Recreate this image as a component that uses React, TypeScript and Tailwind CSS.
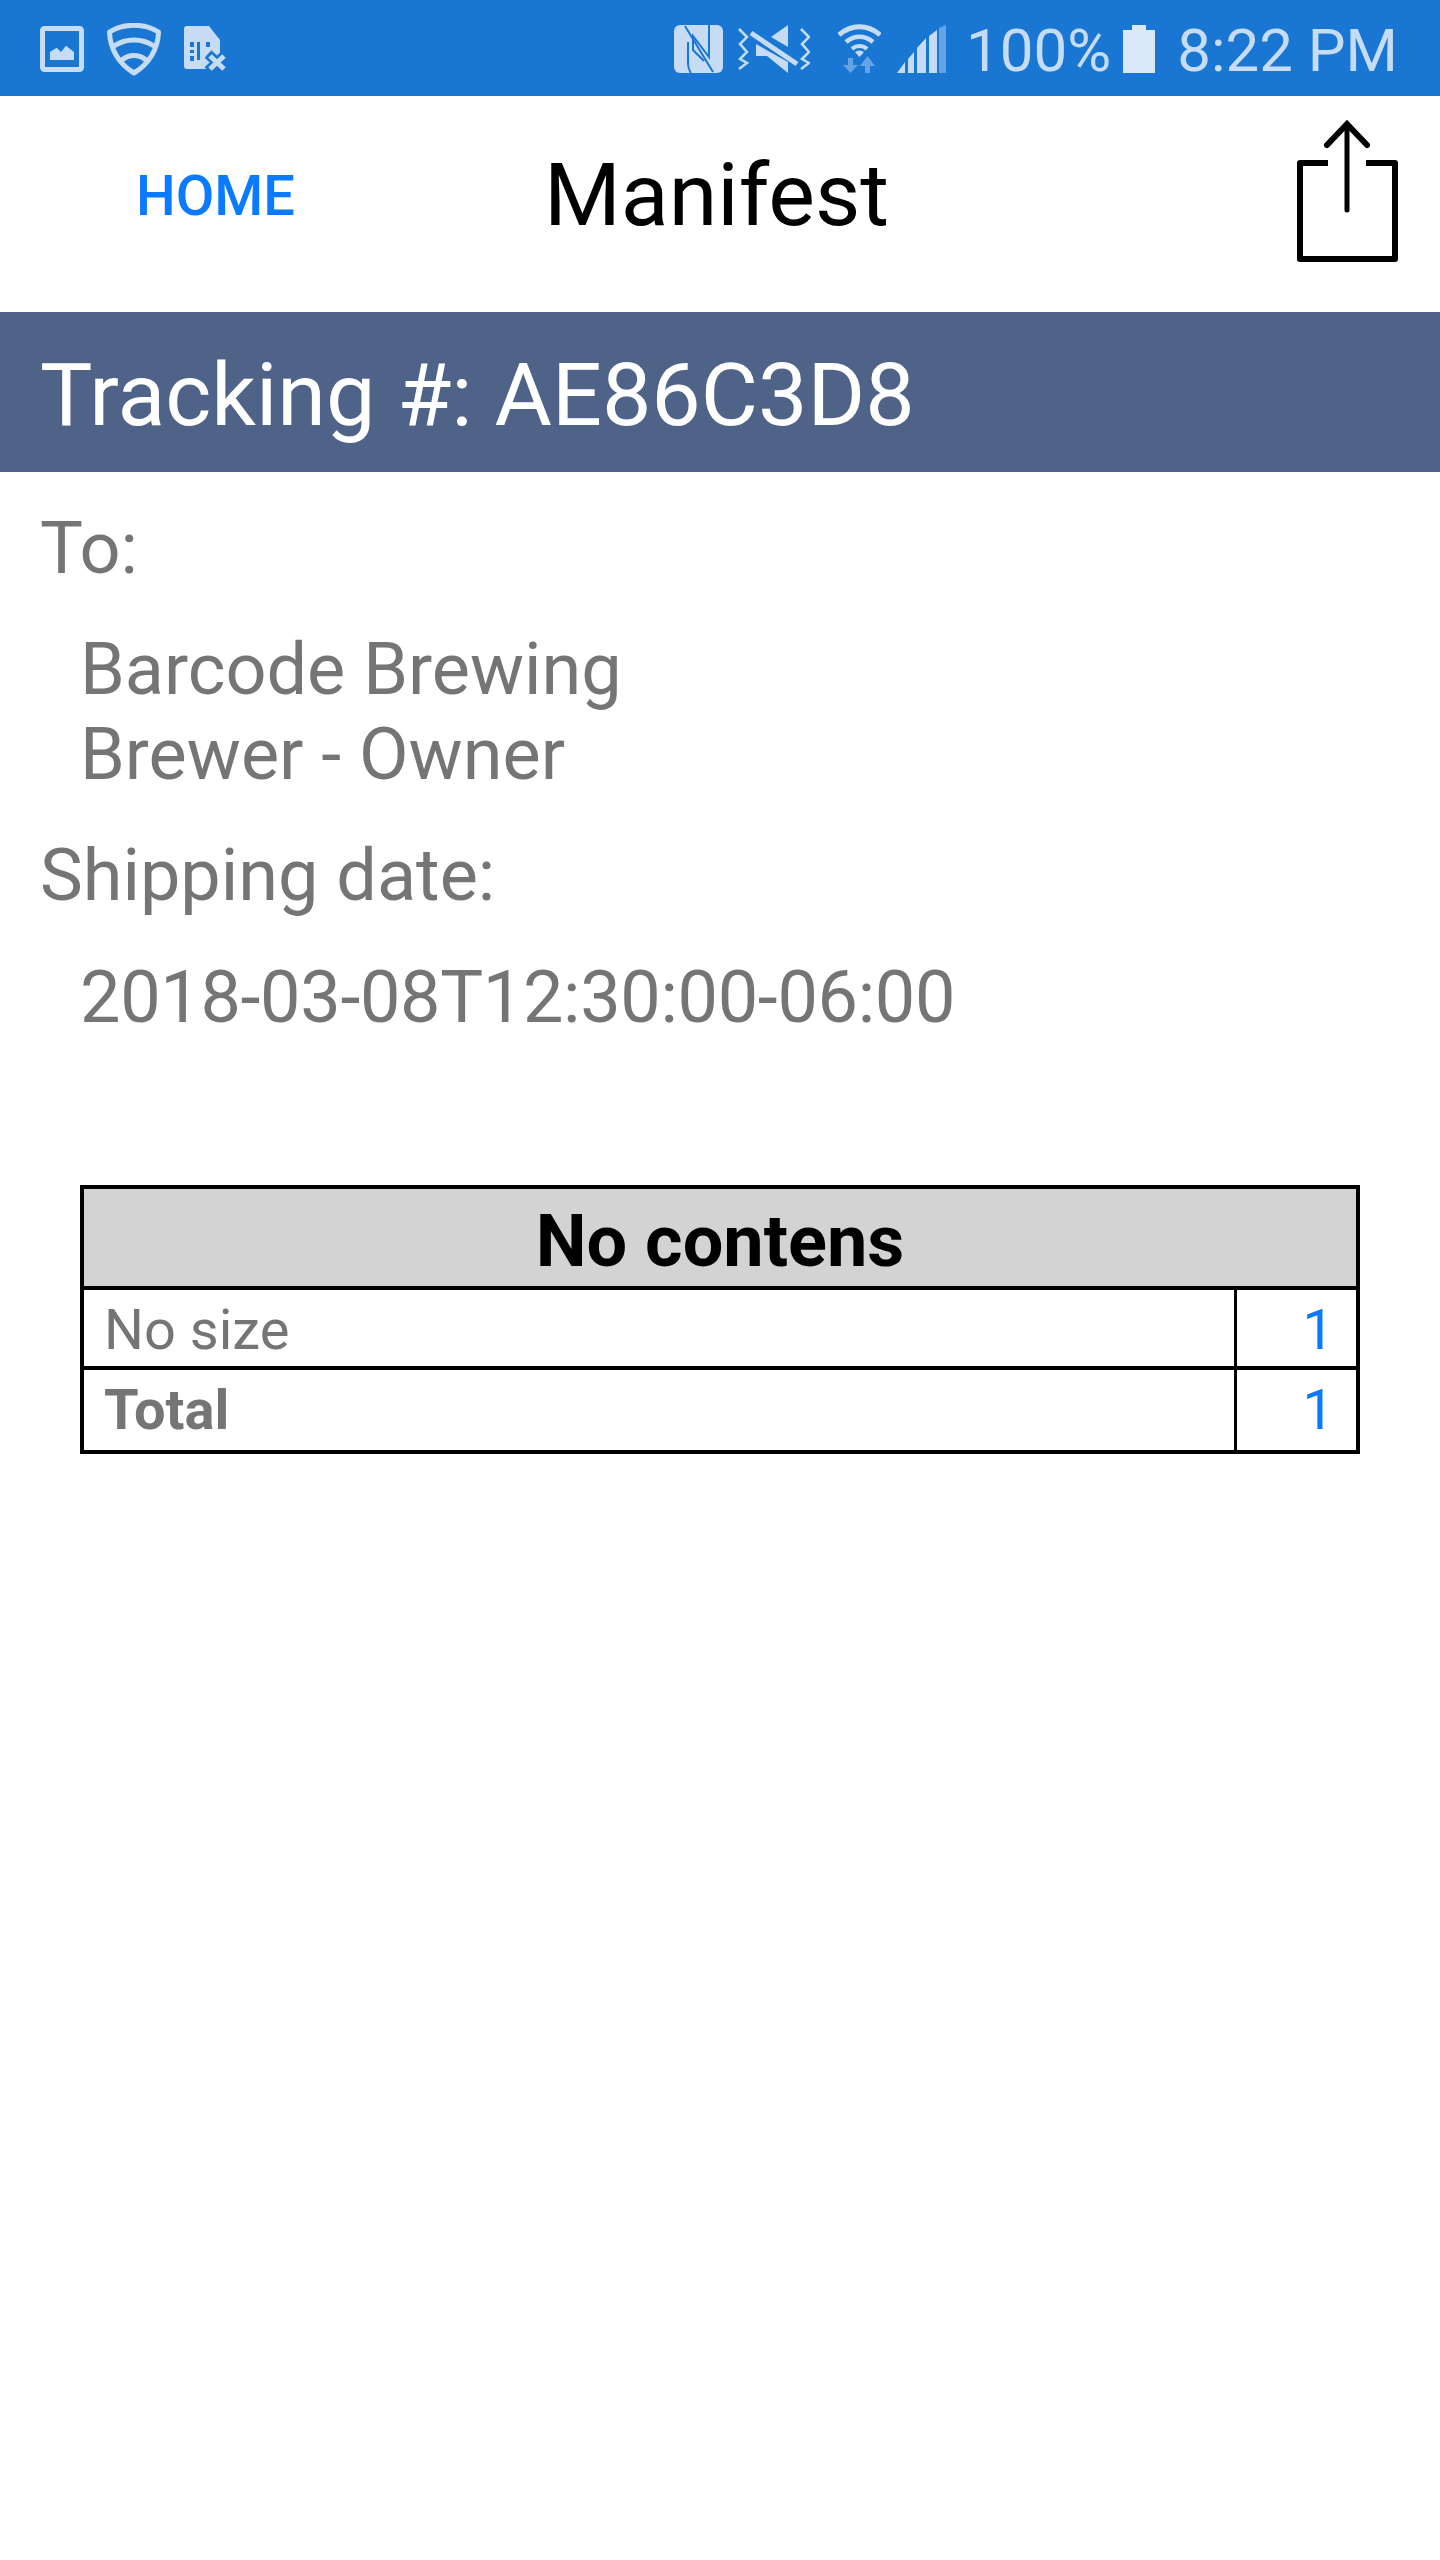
import React from 'react';

const BAR = '#1976d2';
const ICON = '#c6dcf5';

const StatusIcons = () => (
  <div className="flex items-start">
    {/* picture */}
    <svg width="44" height="46" viewBox="0 0 44 46" className="mt-[26px]">
      <rect x="2.5" y="2.5" width="39" height="41" rx="2" fill="none" stroke={ICON} strokeWidth="5" />
      <path d="M10 34V26L16.7 21.7 21 26 26 19.7 34 26V34Z" fill={ICON} />
    </svg>
    {/* shield */}
    <svg width="54" height="53" viewBox="0 0 54 53" className="mt-[23px] ml-[23px]" fill="none" stroke={ICON}>
      <path d="M2.5 9C17 0 37 0 51.5 9 51 26 42 41 27 50 12 41 3 26 2.500 9Z" strokeWidth="5" strokeLinejoin="round" />
      <path d="M7 23C19 15 35 15 47 23" strokeWidth="5" />
      <path d="M15 37C22 31 32 31 39 37" strokeWidth="5" />
    </svg>
    {/* sim x */}
    <svg width="60" height="48" viewBox="0 0 60 48" className="mt-[26px] ml-[23px]">
      <path d="M3 0H25L36 14V43H3Q0 43 0 40V3Q0 0 3 0Z" fill={ICON} />
      <path d="M6 16H10V21H6ZM6 24H10V27H6ZM6 30H10V35H6ZM13 16H16V34H13ZM22 16H26V21H22Z" fill={BAR} />
      <path d="M24 28L42 45M42 28L24 45" stroke={BAR} strokeWidth="10" />
      <path d="M26 30L40 43M40 30L26 43" stroke={ICON} strokeWidth="5" />
    </svg>
  </div>
);

const StatusRight = () => (
  <div className="flex items-start">
    {/* nfc */}
    <svg width="49" height="48" viewBox="0 0 49 48" className="mt-[25px]">
      <rect width="49" height="48" rx="6" fill={ICON} />
      <path d="M11 1L39 47M14 17V38Q14 44 17 48M35 0V32L19 11V25L30 36" fill="none" stroke={BAR} strokeWidth="2" />
    </svg>
    {/* mute vibrate */}
    <svg width="72" height="48" viewBox="0 0 72 48" className="mt-[25px] ml-[15px]" fill="none">
      <path d="M1 4L9 12 2 19 9 27 2 34 9 38 1 44" stroke={ICON} strokeWidth="2.500" />
      <path d="M63 4L71 12 64 19 71 27 64 34 71 38 63 44" stroke={ICON} strokeWidth="2.500" />
      <path d="M33 12L50 0V22Z" fill={ICON} />
      <path d="M18 19V31H29L50 48V37Z" fill={ICON} />
      <path d="M13 8L59 39" stroke={ICON} strokeWidth="5" />
    </svg>
    {/* wifi */}
    <svg width="43" height="49" viewBox="0 0 43 49" className="mt-[24px] ml-[28px]" fill="none">
      <path d="M1 11C13 0 30 0 42 11" stroke={ICON} strokeWidth="5" />
      <path d="M8 18C16 11 27 11 35 18" stroke={ICON} strokeWidth="4.500" />
      <path d="M14 25C18 21 25 21 29 25" stroke={ICON} strokeWidth="4" />
      <path d="M17 28C20 26 23 26 26 28L21.500 33Z" fill={ICON} />
      <path d="M10 34H15V41H20L12.500 49 5 41H10ZM27 49V42H22L29.500 32 37 42H32V49Z" fill="#64a3e4" />
    </svg>
    {/* signal */}
    <svg width="49" height="48" viewBox="0 0 49 48" className="mt-[25px] ml-[16px]">
      <path d="M0 48L8 37V48ZM11 34L17 27V48H11ZM20 23L29 13V48H20ZM32 11L40 5V48H32Z" fill={ICON} />
      <path d="M42 3L49 0V48H42Z" fill="#64a3e4" />
    </svg>
    <span className="font-['Roboto'] text-[60px] leading-[102px] text-[#c6dcf5] ml-[20px]">100%</span>
    {/* battery */}
    <svg width="32" height="48" viewBox="0 0 32 48" className="mt-[25px] ml-[12px]">
      <path d="M9 0H23V5H32V48H0V5H9Z" fill="#dbe8f9" />
    </svg>
    <span className="font-['Roboto'] text-[60px] leading-[102px] text-[#c6dcf5] ml-[22px]">8:22 PM</span>
  </div>
);

const ShareIcon = () => (
  <svg width="104" height="144" viewBox="0 0 104 144" fill="none" stroke="#000" strokeLinecap="round" strokeLinejoin="round">
    <path d="M33 44H5V140H100V44H71" strokeWidth="6" strokeLinecap="butt" />
    <path d="M52 6V91" strokeWidth="5" />
    <path d="M32 26L52 5 72 26" strokeWidth="6" strokeLinejoin="miter" />
  </svg>
);

export default function App() {
  return (
    <div className="w-[1440px] min-h-[2560px] bg-white font-['Roboto',sans-serif] text-[#757575]">
      <div className="h-[96px] bg-[#1976d2] flex justify-between pl-[40px] pr-[42px]">
        <StatusIcons />
        <StatusRight />
      </div>

      <div className="h-[216px] flex items-center justify-between relative">
        <span className="text-[56px] font-medium text-[#0a7aff] ml-[136px] mb-[17px]">HOME</span>
        <span className="text-[88px] text-black absolute left-[544px] top-[-9px] leading-[216px]">Manifest</span>
        <div className="mr-[41px] mb-[26px]">
          <ShareIcon />
        </div>
      </div>

      <div className="h-[160px] bg-[#4f6388] text-white text-[88px] leading-[166px] pl-[40px]">
        Tracking #: AE86C3D8
      </div>

      <div className="text-[72px] leading-[85px] pl-[40px] pt-[34px]">
        <div>To:</div>
        <div className="pl-[40px] pt-[36px]">
          <div>Barcode Brewing</div>
          <div>Brewer - Owner</div>
        </div>
        <div className="pt-[36px]">Shipping date:</div>
        <div className="pl-[40px] pt-[37px] tracking-[-0.33px]">2018-03-08T12:30:00-06:00</div>
      </div>

      <div className="ml-[80px] mt-[145px] w-[1280px] border-4 border-black">
        <div className="h-[101px] pt-[8px] bg-[#d3d3d3] border-b-4 border-black flex items-center justify-center text-[72px] font-bold text-black">
          No contens
        </div>
        <div className="h-[80px] border-b-4 border-black flex text-[56px]">
          <div className="flex-1 pl-[20px] leading-[80px]">No size</div>
          <div className="w-[122px] border-l-[3px] border-black pr-[22px] text-right leading-[80px] text-[#0a7aff]">1</div>
        </div>
        <div className="h-[80px] flex text-[56px]">
          <div className="flex-1 pl-[20px] leading-[80px] font-bold">Total</div>
          <div className="w-[122px] border-l-[3px] border-black pr-[22px] text-right leading-[80px] text-[#0a7aff]">1</div>
        </div>
      </div>
    </div>
  );
}
